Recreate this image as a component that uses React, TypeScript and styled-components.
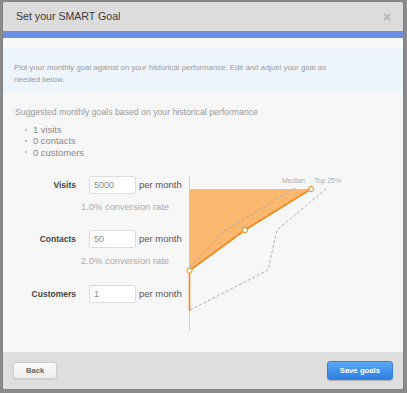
import React from "react";
import styled, { createGlobalStyle } from "styled-components";

const Global = createGlobalStyle`
  html, body { margin: 0; padding: 0; }
  body {
    background: #8b8b8b;
    font-family: "Liberation Sans", Arial, sans-serif;
    width: 407px;
    height: 393px;
    overflow: hidden;
  }
`;

const Page = styled.div`
  padding: 2px 0 0 3px;
`;

const Modal = styled.div`
  width: 400px;
  height: 387px;
  display: flex;
  flex-direction: column;
  background: #f7f7f7;
  border-radius: 3px 3px 2px 2px;
  overflow: hidden;
  box-shadow: 0 0 2px rgba(0, 0, 0, 0.25);
`;

const Header = styled.div`
  height: 29px;
  flex: none;
  background: #dcdcdc;
  display: flex;
  align-items: center;
  justify-content: space-between;
  padding: 0 12px 0 13px;
`;

const Title = styled.div`
  font-size: 10.6px;
  color: #3a3a3a;
  padding-bottom: 1px;
`;

const Close = styled.svg`
  width: 8px;
  height: 8px;
  display: block;
`;

const Stripe = styled.div`
  height: 7px;
  flex: none;
  background: #6a8ee4;
`;

const Spacer = styled.div`
  height: 10px;
  flex: none;
  background: #f9f9fa;
`;

const Info = styled.div`
  flex: none;
  height: 45px;
  box-sizing: border-box;
  background: #eef4fc;
  padding: 14px 11px 0;
  font-size: 7.8px;
  line-height: 12px;
  color: #9a9a9a;
`;

const InfoText = styled.p`
  margin: 0;
  max-width: 320px;
`;

const Body = styled.div`
  flex: 1;
  padding: 14px 12px 0;
`;

const Heading = styled.div`
  font-size: 8.7px;
  line-height: 11px;
  color: #9a9a9a;
`;

const List = styled.ul`
  list-style: none;
  margin: 6px 0 0;
  padding: 0 0 0 10px;
`;

const Item = styled.li`
  font-size: 9.4px;
  line-height: 11.3px;
  color: #8a8a8a;
  display: flex;
  align-items: center;
  &::before {
    content: "";
    width: 2px;
    height: 2px;
    border-radius: 1px;
    background: #aaa;
    margin-right: 6px;
  }
`;

const FormArea = styled.div`
  display: flex;
  margin-top: 14px;
`;

const FormColumn = styled.div`
  width: 170px;
  padding-top: 4px;
  display: flex;
  flex-direction: column;
`;

const Row = styled.div`
  display: flex;
  align-items: center;
  height: 18px;
`;

const Label = styled.label`
  width: 61px;
  text-align: right;
  font-size: 8.5px;
  font-weight: bold;
  color: #444;
  margin-right: 13px;
`;

const Input = styled.input`
  width: 47px;
  height: 18px;
  box-sizing: border-box;
  border: 1px solid #dcdcdc;
  border-radius: 2px;
  background: #fff;
  padding: 0 0 0 4px;
  font-family: inherit;
  font-size: 9px;
  color: #8a8a8a;
  outline: none;
`;

const Unit = styled.span`
  margin-left: 3px;
  font-size: 9.5px;
  color: #555;
  white-space: nowrap;
`;

const Rate = styled.div<{ $gap: number }>`
  margin: 7px 0 ${(p) => p.$gap}px 66px;
  font-size: 9.4px;
  line-height: 12px;
  color: #acacac;
  white-space: nowrap;
`;

const Chart = styled.svg`
  width: 160px;
  height: 160px;
  display: block;
  flex: none;
`;

const Footer = styled.div`
  height: 37px;
  flex: none;
  background: #dedede;
  display: flex;
  align-items: center;
  justify-content: space-between;
  padding: 0 10px 0 10px;
`;

const Button = styled.button<{ $primary?: boolean }>`
  height: ${(p) => (p.$primary ? 19 : 17)}px;
  padding: 0 ${(p) => (p.$primary ? 12 : 12)}px;
  min-width: ${(p) => (p.$primary ? 66 : 43)}px;
  border-radius: 3px;
  font-family: inherit;
  font-weight: bold;
  font-size: 7.7px;
  cursor: pointer;
  border: 1px solid ${(p) => (p.$primary ? "#3a7fd8" : "#cfcfcf")};
  color: ${(p) => (p.$primary ? "#fff" : "#666")};
  background: ${(p) =>
    p.$primary
      ? "linear-gradient(#5aa6f4, #2f7fe4)"
      : "linear-gradient(#fbfbfb, #ededed)"};
  box-shadow: ${(p) =>
    p.$primary ? "0 1px 1px rgba(0,0,0,0.2)" : "0 1px 1px rgba(0,0,0,0.08)"};
`;

export default function App() {
  return (
    <>
      <Global />
      <Page>
        <Modal>
          <Header>
            <Title>Set your SMART Goal</Title>
            <Close viewBox="0 0 8 8">
              <path d="M1 1 L7 7 M7 1 L1 7" stroke="#b8b8b8" strokeWidth="2" />
            </Close>
          </Header>
          <Stripe />
          <Spacer />
          <Info>
            <InfoText>
              Plot your monthly goal against on your historical performance. Edit and adjust your goal as
              needed below.
            </InfoText>
          </Info>
          <Body>
            <Heading>Suggested monthly goals based on your historical performance</Heading>
            <List>
              <Item>1 visits</Item>
              <Item>0 contacts</Item>
              <Item>0 customers</Item>
            </List>
            <FormArea>
              <FormColumn>
                <Row>
                  <Label>Visits</Label>
                  <Input defaultValue="5000" />
                  <Unit>per month</Unit>
                </Row>
                <Rate $gap={17}>1.0% conversion rate</Rate>
                <Row>
                  <Label>Contacts</Label>
                  <Input defaultValue="50" />
                  <Unit>per month</Unit>
                </Row>
                <Rate $gap={18}>2.0% conversion rate</Rate>
                <Row>
                  <Label>Customers</Label>
                  <Input defaultValue="1" />
                  <Unit>per month</Unit>
                </Row>
              </FormColumn>
              <Chart viewBox="0 0 160 160">
                <line x1="4.5" y1="4" x2="4.5" y2="158" stroke="#cfcfcf" strokeWidth="1" />
                <polygon points="4.5,17 126,17 60,58 4.5,98.5" fill="#fdb86f" />
                <polyline
                  points="5,95 38,60 110,16"
                  fill="none"
                  stroke="#a8a8a8"
                  strokeWidth="0.9"
                  strokeDasharray="3 2"
                />
                <polyline
                  points="5,138 83,98 92,58 142,16"
                  fill="none"
                  stroke="#a8a8a8"
                  strokeWidth="0.9"
                  strokeDasharray="3 2"
                />
                <line x1="4.5" y1="98.5" x2="4.5" y2="139" stroke="#f5861c" strokeWidth="1.6" />
                <polyline
                  points="4.5,98.5 60,58 126,17"
                  fill="none"
                  stroke="#f5861c"
                  strokeWidth="1.6"
                />
                <circle cx="4.5" cy="98.5" r="2.6" fill="#fff" stroke="#f5861c" strokeWidth="1" />
                <circle cx="60" cy="58" r="2.6" fill="#fff" stroke="#f5861c" strokeWidth="1" />
                <circle cx="126" cy="17" r="2.6" fill="#fff" stroke="#f5861c" strokeWidth="1" />
                <text
                  x="120"
                  y="10.5"
                  textAnchor="end"
                  fontSize="7"
                  fill="#b0b0b0"
                  fontFamily="Liberation Sans, Arial, sans-serif"
                >
                  Median
                </text>
                <text
                  x="129"
                  y="10.5"
                  fontSize="7"
                  fill="#b0b0b0"
                  fontFamily="Liberation Sans, Arial, sans-serif"
                >
                  Top 25%
                </text>
              </Chart>
            </FormArea>
          </Body>
          <Footer>
            <Button>Back</Button>
            <Button $primary>Save goals</Button>
          </Footer>
        </Modal>
      </Page>
    </>
  );
}
